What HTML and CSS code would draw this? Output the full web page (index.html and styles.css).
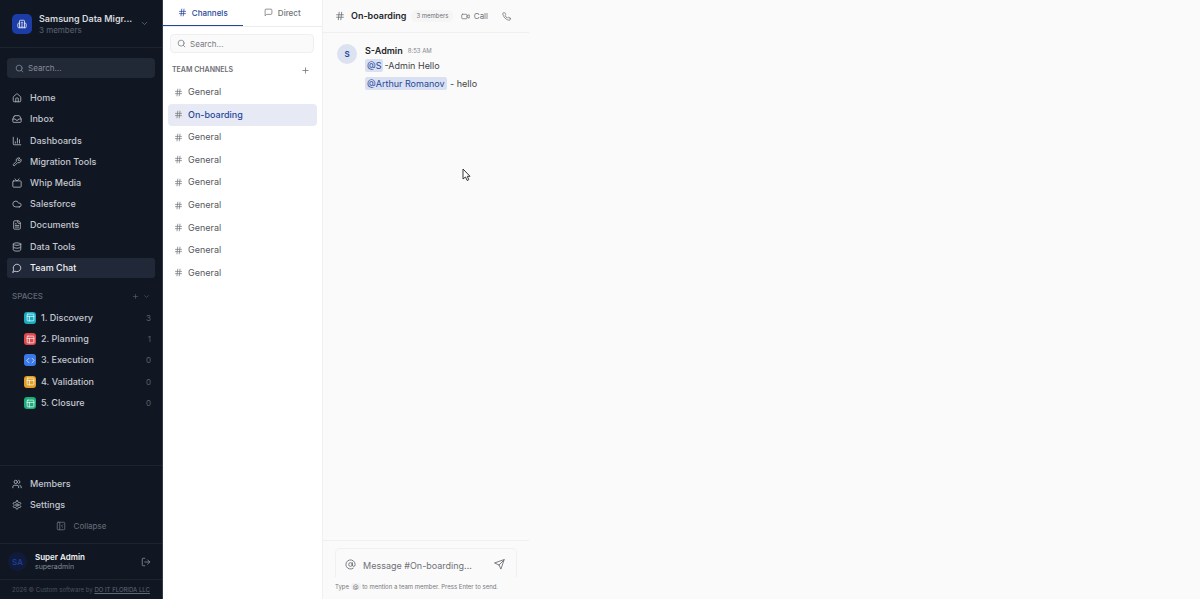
FILE: index.html
```html
<!DOCTYPE html>
<html lang="en">
<head>
<meta charset="utf-8">
<meta name="viewport" content="width=device-width, initial-scale=1">
<title>Team Chat</title>
<link rel="stylesheet" href="styles.css">
</head>
<body>
<svg class="sprite" aria-hidden="true">
  <symbol id="building" viewBox="0 0 24 24"><path d="M10 12h4M10 8h4M14 21v-3a2 2 0 0 0-4 0v3M6 10H4a2 2 0 0 0-2 2v7a2 2 0 0 0 2 2h16a2 2 0 0 0 2-2v-7a2 2 0 0 0-2-2h-2M6 21V5a2 2 0 0 1 2-2h8a2 2 0 0 1 2 2v16"/></symbol>
  <symbol id="down" viewBox="0 0 24 24"><path d="m6 9 6 6 6-6"/></symbol>
  <symbol id="search" viewBox="0 0 24 24"><circle cx="11" cy="11" r="8"/><path d="m21 21-4.3-4.3"/></symbol>
  <symbol id="home" viewBox="0 0 24 24"><path d="M15 21v-8a1 1 0 0 0-1-1h-4a1 1 0 0 0-1 1v8"/><path d="M3 10a2 2 0 0 1 .7-1.5l7-6a2 2 0 0 1 2.6 0l7 6A2 2 0 0 1 21 10v9a2 2 0 0 1-2 2H5a2 2 0 0 1-2-2z"/></symbol>
  <symbol id="inbox" viewBox="0 0 24 24"><path d="M22 12h-6l-2 3h-4l-2-3H2"/><path d="M5.500 5.100 2 12v6a2 2 0 0 0 2 2h16a2 2 0 0 0 2-2v-6l-3.500-6.900A2 2 0 0 0 16.800 4H7.200a2 2 0 0 0-1.700 1.100z"/></symbol>
  <symbol id="chart" viewBox="0 0 24 24"><path d="M3 3v16a2 2 0 0 0 2 2h16M18 17V9M13 17V5M8 17v-3"/></symbol>
  <symbol id="wrench" viewBox="0 0 24 24"><path d="M14.700 6.300a1 1 0 0 0 0 1.400l1.600 1.600a1 1 0 0 0 1.400 0l3.770-3.770a6 6 0 0 1-7.940 7.940l-6.910 6.910a2.120 2.120 0 0 1-3-3l6.910-6.910a6 6 0 0 1 7.940-7.940z"/></symbol>
  <symbol id="tv" viewBox="0 0 24 24"><rect x="2" y="7" width="20" height="15" rx="2"/><path d="m17 2-5 5-5-5"/></symbol>
  <symbol id="cloud" viewBox="0 0 24 24"><path d="M17.500 19H9a7 7 0 1 1 6.710-9h1.790a4.500 4.500 0 1 1 0 9z"/></symbol>
  <symbol id="file" viewBox="0 0 24 24"><path d="M15 2H6a2 2 0 0 0-2 2v16a2 2 0 0 0 2 2h12a2 2 0 0 0 2-2V7z"/><path d="M14 2v4a2 2 0 0 0 2 2h4M10 9H8M16 13H8M16 17H8"/></symbol>
  <symbol id="database" viewBox="0 0 24 24"><ellipse cx="12" cy="5" rx="9" ry="3"/><path d="M3 5v14a9 3 0 0 0 18 0V5M3 12a9 3 0 0 0 18 0"/></symbol>
  <symbol id="bubble" viewBox="0 0 24 24"><path d="M7.900 20A9 9 0 1 0 4 16.100L2 22z"/></symbol>
  <symbol id="plus" viewBox="0 0 24 24"><path d="M5 12h14M12 5v14"/></symbol>
  <symbol id="layout" viewBox="0 0 24 24"><rect x="3" y="3" width="18" height="18" rx="2"/><path d="M3 9h18M9 21V9"/></symbol>
  <symbol id="code" viewBox="0 0 24 24"><path d="m16 18 6-6-6-6M8 6l-6 6 6 6"/></symbol>
  <symbol id="users" viewBox="0 0 24 24"><path d="M16 21v-2a4 4 0 0 0-4-4H6a4 4 0 0 0-4 4v2"/><circle cx="9" cy="7" r="4"/><path d="M22 21v-2a4 4 0 0 0-3-3.870M16 3.130a4 4 0 0 1 0 7.750"/></symbol>
  <symbol id="gear" viewBox="0 0 24 24"><path d="M12.220 2h-.440a2 2 0 0 0-2 2v.180a2 2 0 0 1-1 1.730l-.430.250a2 2 0 0 1-2 0l-.150-.080a2 2 0 0 0-2.730.730l-.220.380a2 2 0 0 0 .730 2.730l.150.100a2 2 0 0 1 1 1.720v.510a2 2 0 0 1-1 1.740l-.150.090a2 2 0 0 0-.730 2.730l.220.380a2 2 0 0 0 2.730.730l.150-.080a2 2 0 0 1 2 0l.430.250a2 2 0 0 1 1 1.730V20a2 2 0 0 0 2 2h.440a2 2 0 0 0 2-2v-.180a2 2 0 0 1 1-1.730l.430-.250a2 2 0 0 1 2 0l.150.080a2 2 0 0 0 2.730-.730l.220-.390a2 2 0 0 0-.730-2.730l-.150-.080a2 2 0 0 1-1-1.740v-.500a2 2 0 0 1 1-1.740l.150-.090a2 2 0 0 0 .730-2.730l-.220-.380a2 2 0 0 0-2.730-.730l-.150.080a2 2 0 0 1-2 0l-.430-.250a2 2 0 0 1-1-1.730V4a2 2 0 0 0-2-2z"/><circle cx="12" cy="12" r="3"/></symbol>
  <symbol id="panel" viewBox="0 0 24 24"><rect x="3" y="3" width="18" height="18" rx="2"/><path d="M9 3v18M16 15l-3-3 3-3"/></symbol>
  <symbol id="logout" viewBox="0 0 24 24"><path d="M9 21H5a2 2 0 0 1-2-2V5a2 2 0 0 1 2-2h4M16 17l5-5-5-5M21 12H9"/></symbol>
  <symbol id="hash" viewBox="0 0 24 24"><path d="M4 9h16M4 15h16M10 3 8 21M16 3l-2 18"/></symbol>
  <symbol id="square" viewBox="0 0 24 24"><path d="M21 15a2 2 0 0 1-2 2H7l-4 4V5a2 2 0 0 1 2-2h14a2 2 0 0 1 2 2z"/></symbol>
  <symbol id="video" viewBox="0 0 24 24"><path d="m16 13 5.220 3.480a.5.5 0 0 0 .780-.420V7.870a.5.5 0 0 0-.750-.430L16 10.500"/><rect x="2" y="6" width="14" height="12" rx="2"/></symbol>
  <symbol id="phone" viewBox="0 0 24 24"><path d="M22 16.920v3a2 2 0 0 1-2.180 2 19.790 19.790 0 0 1-8.630-3.070 19.500 19.500 0 0 1-6-6 19.790 19.790 0 0 1-3.070-8.670A2 2 0 0 1 4.110 2h3a2 2 0 0 1 2 1.720 12.840 12.840 0 0 0 .700 2.810 2 2 0 0 1-.450 2.110L8.090 9.910a16 16 0 0 0 6 6l1.270-1.270a2 2 0 0 1 2.110-.450 12.840 12.840 0 0 0 2.810.700A2 2 0 0 1 22 16.920z"/></symbol>
  <symbol id="at" viewBox="0 0 24 24"><circle cx="12" cy="12" r="4"/><path d="M16 8v5a3 3 0 0 0 6 0v-1a10 10 0 1 0-4 8"/></symbol>
  <symbol id="send" viewBox="0 0 24 24"><path d="M22 2 11 13M22 2l-7 20-4-9-9-4z"/></symbol>
</svg>

<div class="app">
  <aside class="sidebar">
    <button class="workspace" type="button">
      <span class="logo"><svg class="icon"><use href="#building"/></svg></span>
      <span class="stack"><strong class="workspace-name">Samsung Data Migr...</strong><span class="workspace-sub">3 members</span></span>
      <svg class="icon small"><use href="#down"/></svg>
    </button>
    <label class="search dark"><svg class="icon small"><use href="#search"/></svg><input type="search" placeholder="Search..." aria-label="Search workspace"></label>
    <nav class="nav" aria-label="Main">
      <a class="nav-item" href="#"><svg class="icon"><use href="#home"/></svg>Home</a>
      <a class="nav-item" href="#"><svg class="icon"><use href="#inbox"/></svg>Inbox</a>
      <a class="nav-item" href="#"><svg class="icon"><use href="#chart"/></svg>Dashboards</a>
      <a class="nav-item" href="#"><svg class="icon"><use href="#wrench"/></svg>Migration Tools</a>
      <a class="nav-item" href="#"><svg class="icon"><use href="#tv"/></svg>Whip Media</a>
      <a class="nav-item" href="#"><svg class="icon"><use href="#cloud"/></svg>Salesforce</a>
      <a class="nav-item" href="#"><svg class="icon"><use href="#file"/></svg>Documents</a>
      <a class="nav-item" href="#"><svg class="icon"><use href="#database"/></svg>Data Tools</a>
      <a class="nav-item current" href="#" aria-current="page"><svg class="icon"><use href="#bubble"/></svg>Team Chat</a>
    </nav>
    <div class="spaces-head">
      <h2 class="spaces-title">SPACES</h2>
      <button class="plain" type="button" aria-label="Add space"><svg class="icon tiny"><use href="#plus"/></svg></button>
      <button class="plain" type="button" aria-label="Toggle spaces"><svg class="icon tiny"><use href="#down"/></svg></button>
    </div>
    <nav class="spaces" aria-label="Spaces">
      <a class="space" href="#"><span class="tile cyan"><svg class="icon small"><use href="#layout"/></svg></span>1. Discovery<span class="count">3</span></a>
      <a class="space" href="#"><span class="tile red"><svg class="icon small"><use href="#layout"/></svg></span>2. Planning<span class="count">1</span></a>
      <a class="space" href="#"><span class="tile blue"><svg class="icon small"><use href="#code"/></svg></span>3. Execution<span class="count">0</span></a>
      <a class="space" href="#"><span class="tile amber"><svg class="icon small"><use href="#layout"/></svg></span>4. Validation<span class="count">0</span></a>
      <a class="space" href="#"><span class="tile green"><svg class="icon small"><use href="#layout"/></svg></span>5. Closure<span class="count">0</span></a>
    </nav>
    <div class="side-bottom">
      <a class="nav-item" href="#"><svg class="icon"><use href="#users"/></svg>Members</a>
      <a class="nav-item" href="#"><svg class="icon"><use href="#gear"/></svg>Settings</a>
      <button class="collapse" type="button"><svg class="icon"><use href="#panel"/></svg>Collapse</button>
    </div>
    <div class="user">
      <span class="user-avatar">SA</span>
      <span class="stack"><strong class="user-name">Super Admin</strong><span class="user-sub">superadmin</span></span>
      <button class="plain" type="button" aria-label="Log out"><svg class="icon"><use href="#logout"/></svg></button>
    </div>
    <footer class="legal">2026 © Custom software by <a class="legal-link" href="#">DO IT FLORIDA LLC</a></footer>
  </aside>

  <section class="channels" aria-label="Channels">
    <div class="tabs">
      <button class="tab active" type="button"><svg class="icon small"><use href="#hash"/></svg>Channels</button>
      <button class="tab" type="button"><svg class="icon small"><use href="#square"/></svg>Direct</button>
    </div>
    <label class="search light"><svg class="icon small"><use href="#search"/></svg><input type="search" placeholder="Search..." aria-label="Search channels"></label>
    <div class="channels-head"><h2 class="channels-title">TEAM CHANNELS</h2><button class="plain" type="button" aria-label="Add channel"><svg class="icon small"><use href="#plus"/></svg></button></div>
    <nav class="channel-list" aria-label="Team channels">
      <a class="channel" href="#"><svg class="icon small"><use href="#hash"/></svg>General</a>
      <a class="channel selected" href="#" aria-current="true"><svg class="icon small"><use href="#hash"/></svg>On-boarding</a>
      <a class="channel" href="#"><svg class="icon small"><use href="#hash"/></svg>General</a>
      <a class="channel" href="#"><svg class="icon small"><use href="#hash"/></svg>General</a>
      <a class="channel" href="#"><svg class="icon small"><use href="#hash"/></svg>General</a>
      <a class="channel" href="#"><svg class="icon small"><use href="#hash"/></svg>General</a>
      <a class="channel" href="#"><svg class="icon small"><use href="#hash"/></svg>General</a>
      <a class="channel" href="#"><svg class="icon small"><use href="#hash"/></svg>General</a>
      <a class="channel" href="#"><svg class="icon small"><use href="#hash"/></svg>General</a>
    </nav>
  </section>

  <main class="chat">
    <header class="chat-head">
      <svg class="icon"><use href="#hash"/></svg>
      <h1 class="chat-title">On-boarding</h1>
      <span class="badge">3 members</span>
      <button class="call" type="button"><svg class="icon small"><use href="#video"/></svg>Call</button>
      <button class="call" type="button" aria-label="Voice call"><svg class="icon small"><use href="#phone"/></svg></button>
    </header>
    <div class="messages">
      <article class="message">
        <span class="avatar">S</span>
        <div>
          <div class="byline"><strong class="author">S-Admin</strong><time class="time">8:53 AM</time></div>
          <p class="line"><span class="mention">@S</span>-Admin Hello</p>
          <p class="line"><span class="mention">@Arthur Romanov</span> - hello</p>
        </div>
      </article>
    </div>
    <form class="composer">
      <div class="field">
        <button class="plain" type="button" aria-label="Mention"><svg class="icon large"><use href="#at"/></svg></button>
        <input class="message-input" type="text" placeholder="Message #On-boarding..." aria-label="Message">
        <button class="plain" type="button" aria-label="Send"><svg class="icon large"><use href="#send"/></svg></button>
      </div>
      <p class="hint">Type <kbd class="key">@</kbd> to mention a team member. Press Enter to send.</p>
    </form>
  </main>
</div>
<svg class="pointer" viewBox="0 0 9 14" aria-hidden="true"><path d="M1 1v10l2.500-2 1.700 3.500 1.600-.8L5.300 8.300H8z"/></svg>
</body>
</html>
```
FILE: styles.css
```css
* { box-sizing: border-box; }
body { margin: 0; background: #fafafa; color: #3f4248; font: 9px/12px Inter, sans-serif; }
button, input { font: inherit; color: inherit; border: 0; background: none; padding: 0; margin: 0; }
input { min-width: 0; width: 100%; outline: 0; appearance: none; }
a { color: inherit; text-decoration: none; }
h1, h2, p { margin: 0; }

.sprite { display: none; }
.icon { width: 10px; height: 10px; flex: none; fill: none; stroke: currentColor; stroke-width: 2; stroke-linecap: round; stroke-linejoin: round; }
.small { width: 9px; height: 9px; }
.tiny { width: 7px; height: 7px; }
.large { width: 11px; height: 11px; }
.plain { display: flex; align-items: center; justify-content: center; }
.stack { display: flex; flex-direction: column; flex: 1; min-width: 0; text-align: left; }

.app { display: flex; min-height: 100vh; }

/* Sidebar */
.sidebar { display: flex; flex-direction: column; width: 163px; flex: none; background: #111722; color: #c3c8d0; border-right: 1px solid #343a46; }
.workspace { display: flex; align-items: center; gap: 7px; height: 48px; padding: 0 13px 0 12px; border-bottom: 1px solid #1d2430; color: #6b7280; }
.logo { display: grid; place-items: center; width: 20px; height: 20px; border-radius: 5px; background: #1c3da5; color: #e5e9f7; }
.workspace-name { color: #d5d8de; font-size: 9px; font-weight: 600; line-height: 12px; white-space: nowrap; }
.workspace-sub { font-size: 8px; line-height: 10px; color: #5b6472; }
.search { display: flex; align-items: center; border-radius: 4px; font-size: 8px; }
.dark { height: 20px; margin: 10px 7px; padding: 0 8px; gap: 4px; background: #222936; color: #858d99; }
.search input::placeholder, .message-input::placeholder { color: inherit; opacity: 1; }
.nav { display: grid; grid-auto-rows: 1fr; gap: 1px; min-height: 190px; margin: 0 7px; }
.nav-item { display: flex; align-items: center; gap: 8px; padding: 0 5px; border-radius: 3px; font-weight: 500; }
.nav-item .icon { color: #b4bac4; }
.nav-item.current { background: #212938; color: #f1f3f6; }
.nav-item.current .icon { color: #e1e4e9; }
.spaces-head { display: flex; align-items: center; gap: 4px; margin: 12px 12px 5px; color: #616977; }
.spaces-title { flex: 1; font-size: 8px; line-height: 12px; font-weight: 500; }
.spaces { display: grid; grid-auto-rows: 1fr; min-height: 107px; margin: 0 11px 0 24px; }
.space { display: flex; align-items: center; gap: 5px; font-weight: 500; }
.tile { display: grid; place-items: center; width: 12px; height: 12px; border-radius: 3px; color: #eef8fa; }
.cyan { background: #18acc2; }
.red { background: #df484d; }
.blue { background: #3b78e8; }
.amber { background: #e49d20; }
.green { background: #1bac7a; }
.count { margin-left: auto; color: #596170; font-size: 8px; font-weight: 400; }
.side-bottom { display: grid; grid-auto-rows: 21px; margin-top: auto; padding: 7px 7px; border-top: 1px solid #1d2430; }
.collapse { display: flex; align-items: center; justify-content: center; gap: 8px; font-size: 8px; color: #68707d; }
.user { display: flex; align-items: center; gap: 8px; height: 36px; padding: 0 11px 0 8px; border-top: 1px solid #1d2430; color: #858d99; }
.user-avatar { display: grid; place-items: center; width: 19px; height: 19px; border-radius: 50%; background: #101b3c; color: #20419d; font-size: 8px; font-weight: 500; }
.user-name { color: #f1f3f6; font-size: 8px; line-height: 10px; font-weight: 600; }
.user-sub { font-size: 7px; line-height: 9px; }
.legal { height: 20px; border-top: 1px solid #1d2430; color: #4b535f; font-size: 6px; line-height: 19px; text-align: center; }
.legal-link { text-decoration: underline; color: #616977; }

/* Channel list */
.channels { width: 160px; flex: none; background: #fff; border-right: 1px solid #f0f0f1; }
.tabs { display: flex; height: 27px; border-bottom: 1px solid #ececee; }
.tab { display: flex; flex: 1; align-items: center; justify-content: center; gap: 5px; font-size: 8px; font-weight: 500; color: #6f7277; border-bottom: 1px solid transparent; }
.tab.active { color: #27479b; border-color: #27479b; }
.light { height: 19px; margin: 7px 8px 7px 7px; padding: 0 6px; gap: 4px; border: 1px solid #efeff1; background: #fafafa; color: #77797e; }
.channels-head { display: flex; align-items: center; justify-content: space-between; height: 20px; padding: 0 12px 0 9px; color: #6c6e73; }
.channels-title { font-size: 7px; line-height: 10px; font-weight: 600; }
.channel-list { display: grid; grid-auto-rows: 1fr; min-height: 203px; margin: 1px 5px 0; }
.channel { display: flex; align-items: center; gap: 5px; padding: 0 6px; border-radius: 4px; color: #55585e; }
.channel .icon { color: #77797e; }
.channel.selected { background: #e7eaf4; color: #27479b; font-weight: 500; }

/* Conversation */
.chat { display: flex; flex-direction: column; flex: 0 1 206px; min-width: 0; }
.chat-head { display: flex; align-items: center; height: 33px; padding: 0 18px 0 12px; border-bottom: 1px solid #f0f0f1; color: #6f7277; }
.chat-title { margin: 0 5px 0 6px; font-size: 9px; font-weight: 600; color: #25272b; white-space: nowrap; }
.badge { margin-right: auto; padding: 1px 5px; border-radius: 6px; background: #f5f5f6; font-size: 6px; line-height: 10px; white-space: nowrap; }
.call { display: flex; align-items: center; gap: 4px; font-size: 8px; margin-left: 6px; }
.call + .call { margin-left: 14px; }
.messages { flex: 1; padding: 11px 14px; }
.message { display: flex; gap: 8px; }
.avatar { display: grid; place-items: center; width: 20px; height: 20px; flex: none; border-radius: 50%; background: #dce2f0; color: #27479b; font-size: 8px; font-weight: 600; }
.byline { display: flex; align-items: center; gap: 5px; height: 13px; }
.author { font-weight: 600; color: #25272b; }
.time { font-size: 6px; color: #85878c; }
.line { line-height: 18px; }
.mention { padding: 1px 2px; margin-right: 1px; border-radius: 2px; background: #d9e0f1; color: #27479b; }
.composer { padding: 7px 12px 6px; border-top: 1px solid #f0f0f1; }
.field { display: flex; align-items: center; gap: 7px; height: 29px; padding: 2px 11px 0 9px; border: 1px solid #f0f0f1; border-bottom: 0; border-radius: 5px 5px 0 0; color: #6f7277; }
.message-input { flex: 1; padding-top: 4px; font-size: 9px; }
.hint { margin-top: 4px; font-size: 6px; line-height: 12px; color: #77797e; white-space: nowrap; }
.key { padding: 0 2px; border-radius: 2px; background: #f2f2f3; font: inherit; }
.pointer { position: absolute; left: 462px; top: 168px; width: 9px; height: 14px; fill: #fff; stroke: #33353a; stroke-width: 1; }
```
